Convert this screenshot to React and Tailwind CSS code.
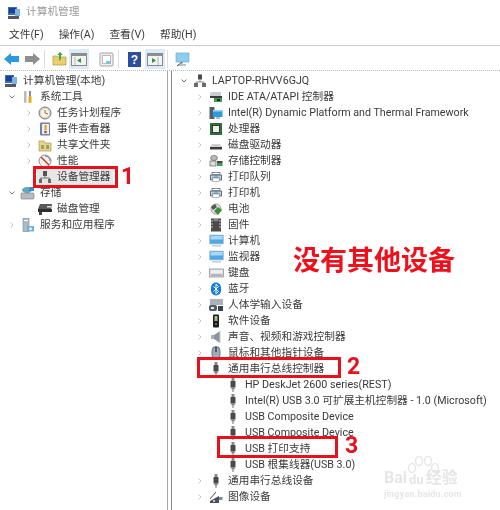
import React from "react";

const FONT = "font-['Roboto','Noto_Sans_CJK_SC',sans-serif]";

const S = ({ children, w = 14, h = 14, vb = "0 0 14 14" }) => (
  <svg width={w} height={h} viewBox={vb} className="shrink-0">{children}</svg>
);

const Icons = {
  computer: () => (<S><rect x="1" y="1" width="9" height="8" fill="#3a6ea8" /><rect x="2" y="2" width="7" height="5" fill="#1f3f9f" /><rect x="8" y="3" width="5" height="7" fill="#7fb4dc" /><rect x="1" y="10" width="11" height="3" fill="#556" /></S>),
  tools: () => (<S><rect x="3" y="1" width="2.5" height="12" rx="1" fill="#b9b9b9" /><rect x="8" y="1" width="2" height="5" fill="#8c8c8c" /><rect x="7.5" y="6" width="3" height="7" rx="1" fill="#e9a825" /></S>),
  clock: () => (<S><circle cx="7" cy="7" r="6" fill="#d9d6cc" stroke="#777" /><circle cx="7" cy="7" r="4" fill="#f6f3e6" /><path d="M7 4v3l3 1" stroke="#a5661c" fill="none" /></S>),
  log: () => (<S><rect x="2" y="0.5" width="10" height="13" rx="1" fill="#6d83a8" /><rect x="4" y="2" width="7" height="10" fill="#eef0f4" /><path d="M7.500 3v5" stroke="#d8a21c" strokeWidth="2" /><circle cx="7.500" cy="10" r="1.300" fill="#c0392b" /></S>),
  share: () => (<S><path d="M1 3h5l1 2h6v8H1z" fill="#e8d48a" stroke="#a8954f" strokeWidth=".7" /><path d="M3 8h3M3 10h3M8 8h3M8 10h3" stroke="#5c6e2e" /></S>),
  perf: () => (<S><circle cx="7" cy="7" r="6" fill="#f5f1ea" stroke="#8c8c8c" /><path d="M3 3l8 8" stroke="#c0392b" strokeWidth="1.500" /><path d="M7 2a5 5 0 0 1 5 5" stroke="#67a" fill="none" /></S>),
  devmgr: () => (<S><rect x="5" y="1" width="4" height="5" fill="#555" /><rect x="1" y="9" width="3" height="4" fill="#666" /><rect x="10" y="9" width="3" height="4" fill="#666" /><path d="M7 6v2M2.500 9V8h9v1" stroke="#777" fill="none" /></S>),
  storage: () => (<S w={16} vb="0 0 16 14"><ellipse cx="7" cy="4" rx="5" ry="3" fill="#62a7bd" /><path d="M9 1h5v4H9z" fill="#3b8fc4" /><rect x="1" y="7" width="13" height="6" rx="1" fill="#b8bcc0" stroke="#777" strokeWidth=".6" /></S>),
  disk: () => (<S w={16} vb="0 0 16 14"><path d="M3 2h12l-1 5H1z" fill="#5a5a5a" /><rect x="1" y="7" width="14" height="3" fill="#2f2f2f" /><rect x="2" y="10" width="3" height="3" fill="#444" /><rect x="10" y="4" width="4" height="1.500" fill="#e0e0e0" /></S>),
  services: () => (<S><rect x="2" y="0.5" width="6" height="13" fill="#aeb9c4" stroke="#7b8794" strokeWidth=".6" /><rect x="3" y="2" width="4" height="1" fill="#fff" /><rect x="6" y="8" width="7" height="5.500" fill="#6fb0dc" /><circle cx="9.500" cy="10.700" r="1.500" fill="#eef" /></S>),
  laptop: () => (<S><rect x="5" y="0.500" width="4" height="5" fill="#4a4a4a" /><rect x="1" y="9" width="4" height="4" fill="#6b6b6b" /><rect x="9" y="9" width="4" height="4" fill="#6b6b6b" /><path d="M7 5.500V8M3 9V8h8v1" stroke="#888" fill="none" /></S>),
  ide: () => (<S><path d="M1 4a2 2 0 0 1 2-2h9v4H1z" fill="#c9cdd0" /><rect x="1" y="6" width="12" height="2" fill="#3b3b3b" /><rect x="5" y="8" width="8" height="4" fill="#3f9a52" /><rect x="8" y="9" width="3" height="2" fill="#222" /></S>),
  intel: () => (<S><rect x="0.500" y="1" width="5" height="12" fill="#555f69" /><rect x="4" y="4" width="9.500" height="7" fill="#2e9be0" /><rect x="4" y="4" width="9.500" height="1.500" fill="#9ed3f5" /><rect x="7" y="11" width="4" height="2" fill="#a8c2d4" /></S>),
  cpu: () => (<S><rect x="1" y="1" width="12" height="12" fill="#2f6d3f" /><rect x="3.500" y="3.500" width="7" height="7" fill="#eef0ea" stroke="#222" strokeWidth=".8" /></S>),
  hdd: () => (<S><path d="M3 6h8l2 3H1z" fill="#d0d0d0" /><rect x="1" y="9" width="12" height="2.500" fill="#3a3a3a" /></S>),
  stctl: () => (<S><ellipse cx="5" cy="4" rx="3.500" ry="2.500" fill="#bbb" stroke="#666" strokeWidth=".7" /><rect x="1" y="7" width="6" height="5" fill="#dcdcdc" stroke="#666" strokeWidth=".7" /><rect x="8" y="7" width="5.500" height="2" fill="#444" /><rect x="8" y="9" width="5.500" height="3" fill="#3f9a52" /></S>),
  printer: () => (<S><path d="M1.500 5h11v5h-2V8h-7v2h-2z" fill="#c5d0d8" stroke="#3e4d5c" strokeWidth=".8" /><rect x="3" y="2.500" width="8" height="2" fill="#fff" stroke="#4a5a68" strokeWidth=".7" /><rect x="3.500" y="8" width="7" height="3.500" fill="#fff" stroke="#7a8a98" strokeWidth=".6" /><rect x="5" y="5.500" width="4" height="1" fill="#3a9bd8" /></S>),
  battery: () => (<S><circle cx="7" cy="7" r="5" fill="#dfe6dc" stroke="#777" strokeWidth=".7" /><path d="M2 5l4-3 2 3-4 3z" fill="#555" /><path d="M5 9l4-4 4 3-4 5z" fill="#3e8f35" /></S>),
  firmware: () => (<S><path d="M2 0.500h10v13H2z" fill="#4b4b4b" /><path d="M2 3h2M2 6h2M2 9h2M10 3h2M10 6h2M10 9h2" stroke="#c9c9c9" /><path d="M4.500 1h5v1.500l-2.500 1-2.500-1z" fill="#8a8a8a" /></S>),
  monitor: () => (<S w={15} vb="0 0 15 14"><rect x="0.500" y="1" width="14" height="9" fill="#4ea9e6" stroke="#b9c7d2" strokeWidth=".7" /><rect x="1.500" y="2" width="12" height="3.500" fill="#a8d8f5" /><rect x="3" y="11" width="9" height="1.500" fill="#c3ccd3" /></S>),
  keyboard: () => (<S w={15} vb="0 0 15 14"><rect x="0.500" y="3" width="14" height="8" fill="#d4d7da" stroke="#868c92" strokeWidth=".7" /><rect x="1.500" y="4" width="12" height="3.500" fill="#eceef0" /><rect x="2" y="8.500" width="11" height="1" fill="#8e949a" /></S>),
  bt: () => (<S><rect x="2" y="0.500" width="10" height="13" rx="5" fill="#0f7ee0" /><path d="M4.500 4.500l5 5L7 12V2l2.500 2.500-5 5" stroke="#fff" fill="none" /></S>),
  hid: () => (<S w={16} vb="0 0 16 14"><rect x="2" y="1" width="13" height="6" fill="#a9b2bb" /><rect x="1" y="7" width="8" height="6" rx="2" fill="#525a62" /><rect x="10" y="8" width="5" height="5" fill="#39424a" /><rect x="3" y="9" width="3" height="2" fill="#e8eef2" /></S>),
  sw: () => (<S><rect x="4" y="0.500" width="6" height="13" rx="1" fill="#1c1c1c" /><rect x="5.500" y="2" width="3" height="5" fill="#9bc78a" /><rect x="6" y="9" width="2" height="2" fill="#666" /></S>),
  sound: () => (<S><rect x="2" y="5" width="3" height="4" fill="#aab0b6" /><path d="M5 5l6-4v12L5 9z" fill="#8d959c" /><path d="M11 1v12" stroke="#cbd0d4" /></S>),
  mouse: () => (<S><rect x="3" y="0.500" width="8" height="13" rx="4" fill="#9eabb8" stroke="#4b5660" strokeWidth=".7" /><path d="M7 1v5" stroke="#39424a" strokeWidth="1.500" /></S>),
  usb: () => (<S><rect x="5.500" y="0" width="3" height="3" fill="#8a8a8a" /><rect x="4.500" y="3" width="5" height="6.500" rx=".5" fill="#4a4a4a" /><rect x="5.500" y="9.500" width="3" height="2" fill="#777" /><rect x="6.300" y="11.500" width="1.400" height="2.500" fill="#999" /></S>),
  imaging: () => (<S><path d="M1 11l9-5v7H1z" fill="#4a5058" /><path d="M1 9l6-7" stroke="#555" /><rect x="10" y="7" width="3.500" height="3" fill="#7a8a96" /><circle cx="5" cy="11" r="1" fill="#eee" /></S>),
};

const Chevron = ({ open }) => (
  <svg width="8" height="8" viewBox="0 0 8 8" className="shrink-0">
    {open ? <path d="M1.500 2.500L4 5l2.500-2.500" fill="none" stroke="#777" /> : <path d="M2.500 1.500L5 4 2.500 6.500" fill="none" stroke="#c4c4c4" />}
  </svg>
);

const Row = ({ base, chev, icon: I, label, hl }) => (
  <div className={`flex items-center h-4 whitespace-nowrap text-[10.7px] leading-4 text-[#3a3a3a] ${base}`}>
    <span className="w-[17px] shrink-0 flex justify-center">{chev ? <Chevron open={chev === "open"} /> : null}</span>
    <span className={`flex items-center h-4 pl-[1px] pr-[3px] ${hl ? "bg-[#e6e6e6]" : ""}`}>
      <span className="w-[14px] shrink-0 flex justify-center mr-[4px]"><I /></span>
      <span className="pl-[1px]">{label}</span>
    </span>
  </div>
);

const leftRows = [
  { chev: null, icon: Icons.computer, label: "计算机管理(本地)", p: "ml-[-14px]" },
  { chev: "open", icon: Icons.tools, label: "系统工具", p: "pl-[3px]" },
  { chev: "closed", icon: Icons.clock, label: "任务计划程序", p: "pl-[20px]" },
  { chev: "closed", icon: Icons.log, label: "事件查看器", p: "pl-[20px]" },
  { chev: "closed", icon: Icons.share, label: "共享文件夹", p: "pl-[20px]" },
  { chev: "closed", icon: Icons.perf, label: "性能", p: "pl-[20px]" },
  { chev: null, icon: Icons.devmgr, label: "设备管理器", p: "pl-[20px]", hl: true },
  { chev: "open", icon: Icons.storage, label: "存储", p: "pl-[3px]" },
  { chev: null, icon: Icons.disk, label: "磁盘管理", p: "pl-[20px]" },
  { chev: "closed", icon: Icons.services, label: "服务和应用程序", p: "pl-[3px]" },
];

const L1 = "pl-[19px]";
const L2 = "pl-[36px]";
const rightRows = [
  { chev: "open", icon: Icons.laptop, label: "LAPTOP-RHVV6GJQ", p: "pl-[3px]" },
  { chev: "closed", icon: Icons.ide, label: "IDE ATA/ATAPI 控制器", p: L1 },
  { chev: "closed", icon: Icons.intel, label: "Intel(R) Dynamic Platform and Thermal Framework", p: L1 },
  { chev: "closed", icon: Icons.cpu, label: "处理器", p: L1 },
  { chev: "closed", icon: Icons.hdd, label: "磁盘驱动器", p: L1 },
  { chev: "closed", icon: Icons.stctl, label: "存储控制器", p: L1 },
  { chev: "closed", icon: Icons.printer, label: "打印队列", p: L1 },
  { chev: "closed", icon: Icons.printer, label: "打印机", p: L1 },
  { chev: "closed", icon: Icons.battery, label: "电池", p: L1 },
  { chev: "closed", icon: Icons.firmware, label: "固件", p: L1 },
  { chev: "closed", icon: Icons.monitor, label: "计算机", p: L1 },
  { chev: "closed", icon: Icons.monitor, label: "监视器", p: L1 },
  { chev: "closed", icon: Icons.keyboard, label: "键盘", p: L1 },
  { chev: "closed", icon: Icons.bt, label: "蓝牙", p: L1 },
  { chev: "closed", icon: Icons.hid, label: "人体学输入设备", p: L1 },
  { chev: "closed", icon: Icons.sw, label: "软件设备", p: L1 },
  { chev: "closed", icon: Icons.sound, label: "声音、视频和游戏控制器", p: L1 },
  { chev: "closed", icon: Icons.mouse, label: "鼠标和其他指针设备", p: L1 },
  { chev: null, icon: Icons.usb, label: "通用串行总线控制器", p: L1 },
  { chev: null, icon: Icons.usb, label: "HP DeskJet 2600 series(REST)", p: L2 },
  { chev: null, icon: Icons.usb, label: "Intel(R) USB 3.0 可扩展主机控制器 - 1.0 (Microsoft)", p: L2 },
  { chev: null, icon: Icons.usb, label: "USB Composite Device", p: L2 },
  { chev: null, icon: Icons.usb, label: "USB Composite Device", p: L2 },
  { chev: null, icon: Icons.usb, label: "USB 打印支持", p: L2 },
  { chev: null, icon: Icons.usb, label: "USB 根集线器(USB 3.0)", p: L2 },
  { chev: "closed", icon: Icons.usb, label: "通用串行总线设备", p: L1 },
  { chev: "closed", icon: Icons.imaging, label: "图像设备", p: L1 },
];

const Tool = ({ active, children }) => (
  <span className={`w-[20px] h-[20px] flex items-center justify-center shrink-0 ${active ? "bg-[#dcebf7]" : ""}`}>{children}</span>
);

const Panel = ({ arrow }) => (
  <svg width="16" height="14" viewBox="0 0 16 14">
    <rect x="0.500" y="1.500" width="15" height="12" fill="#f3f3f3" stroke="#8a8a8a" />
    <rect x="1" y="2" width="14" height="2" fill="#8f8f8f" />
    {arrow === "left" ? <path d="M10 6v5L6 8.500z" fill="#2a9a3d" /> : <path d="M5 6v5l4-2.500z" fill="#2a9a3d" />}
    <path d={arrow === "left" ? "M4 5v8" : "M11 5v8"} stroke="#b5b5b5" />
  </svg>
);

export default function App() {
  return (
    <div className={`relative w-[500px] h-[510px] bg-white overflow-hidden ${FONT}`}>
      <div className="blur-[0.45px]">
        <div className="h-[23px] flex items-center gap-[5px] pl-[7px] pt-[2px] text-[10.7px] text-[#9a9a9a]">
          <Icons.computer />
          <span>计算机管理</span>
        </div>
        <div className="h-[20px] mt-[2px] flex items-center gap-[15px] pl-[9px] text-[10.7px] text-[#3a3a3a]">
          <span>文件(F)</span><span>操作(A)</span><span>查看(V)</span><span>帮助(H)</span>
        </div>
        <div className="h-[25px] border-t border-[#cfcfcf] flex items-center pl-[2px] pt-[2px]">
          <Tool><svg width="16" height="12" viewBox="0 0 16 12"><path d="M0 6l7-6v3h8v6H7v3z" fill="#2d9ae0" /></svg></Tool>
          <Tool><svg width="16" height="12" viewBox="0 0 16 12"><path d="M16 6L9 0v3H1v6h8v3z" fill="#8e8e8e" /></svg></Tool>
          <span className="w-px h-[18px] bg-[#ddd] ml-[2px] mr-[4px]" />
          <Tool><svg width="15" height="14" viewBox="0 0 15 14"><path d="M1 4h4l1 1h8v8H1z" fill="#e9cf6a" stroke="#b39a3d" strokeWidth=".7" /><path d="M7 9V3H5l3-3 3 3H9v4z" fill="#4aa63f" /></svg></Tool>
          <Tool active><Panel arrow="left" /></Tool>
          <span className="w-[7px]" />
          <Tool><svg width="15" height="15" viewBox="0 0 15 15"><rect x="1" y="1" width="13" height="13" rx="1" fill="#eceff1" stroke="#a5a5a5" /><rect x="3.500" y="3.500" width="8" height="8" fill="#fff" stroke="#bbb" /><path d="M7 9h4v3H7z" fill="#7fc2e0" /></svg></Tool>
          <span className="w-px h-[18px] bg-[#ddd] ml-[2px] mr-[5px]" />
          <Tool><svg width="13" height="15" viewBox="0 0 13 15"><rect width="13" height="15" fill="#2b4f9e" /><text x="6.500" y="12" textAnchor="middle" fontSize="12" fontWeight="700" fill="#fff" fontFamily="Liberation Sans">?</text></svg></Tool>
          <span className="w-px" />
          <Tool active><Panel arrow="right" /></Tool>
          <span className="w-px h-[18px] bg-[#ddd] ml-[2px] mr-[4px]" />
          <Tool><svg width="15" height="15" viewBox="0 0 15 15"><rect x="1" y="1" width="13" height="9" fill="#8ccdf0" stroke="#7aa9c2" strokeWidth=".7" /><path d="M7 10v2M3 13h8" stroke="#6f8a99" /><path d="M2 14l5-4" stroke="#555" /></svg></Tool>
        </div>

        <div className="flex h-[440px] border-t border-dotted border-[#bbb]">
          <div className="w-[168px] shrink-0 border-r border-[#a8a8a8] pt-[2px] overflow-hidden">
            {leftRows.map((r, i) => (
              <Row key={i} base={r.p} chev={r.chev} icon={r.icon} label={r.label} hl={r.hl} />
            ))}
          </div>
          <div className="w-[3px] shrink-0" />
          <div className="flex-1 border-l border-[#8a8a8a] pt-[2px] overflow-hidden">
            {rightRows.map((r, i) => (
              <Row key={i} base={r.p} chev={r.chev} icon={r.icon} label={r.label} />
            ))}
          </div>
        </div>
      </div>

      <div className="absolute left-[33px] top-[166px] w-[85px] h-[22px] border-[3px] border-[#e8101c]" />
      <span className="absolute left-[121px] top-[168px] text-[23px] leading-[18px] font-bold text-[#e8101c]">1</span>
      <div className="absolute left-[197px] top-[357px] w-[144px] h-[21px] border-[3px] border-[#e8101c]" />
      <span className="absolute left-[347px] top-[358px] text-[23px] leading-[18px] font-bold text-[#e8101c]">2</span>
      <div className="absolute left-[217px] top-[436px] w-[121px] h-[22px] border-[3px] border-[#e8101c]" />
      <span className="absolute left-[345px] top-[437px] text-[23px] leading-[18px] font-bold text-[#e8101c]">3</span>
      <span className="absolute left-[293px] top-[244px] text-[27px] leading-[34px] font-bold text-[#f0101c] blur-[0.3px]">没有其他设备</span>

      <svg width="34" height="22" viewBox="0 0 34 22" className="absolute left-[406px] top-[456px]">
        <g fill="none" stroke="#e8e8e8" strokeWidth="1.500">
          <ellipse cx="6" cy="12" rx="3.500" ry="4.500" />
          <ellipse cx="13" cy="5" rx="3.500" ry="4.500" />
          <ellipse cx="22" cy="5" rx="3.500" ry="4.500" />
          <ellipse cx="29" cy="12" rx="3.500" ry="4.500" />
        </g>
      </svg>
      <div className="absolute left-[384px] top-[470px] text-[#e6e6e6] leading-none">
        <div className="text-[16px] font-bold flex items-end gap-[2px]"><span>Bai</span><span className="text-[13px]">du</span><span>经验</span></div>
        <div className="text-[9px] mt-[4px] font-bold tracking-[0.2px]">jingyan.baidu.com</div>
      </div>
    </div>
  );
}
